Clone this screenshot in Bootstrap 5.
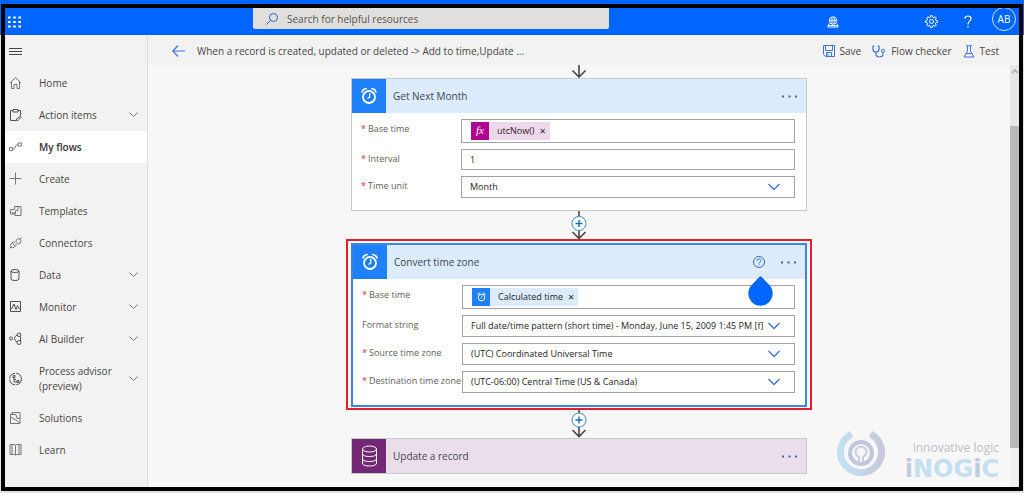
<!DOCTYPE html>
<html lang="en">
<head>
<meta charset="utf-8">
<meta name="viewport" content="width=device-width, initial-scale=1">
<title>My flows</title>
<link href="https://cdn.jsdelivr.net/npm/bootstrap@5.3.0/dist/css/bootstrap.min.css" rel="stylesheet">
<style>
:root{--brand:#0066ff;--link:#3f74d8;--ink:#484644}
body{font-family:"Open Sans","Noto Sans",sans-serif;font-size:10px;line-height:16px;color:var(--ink);background:linear-gradient(var(--brand) 35px,#e2e2e2 35px)}
svg{fill:none;stroke:currentColor;stroke-width:1;display:block;flex:none}
a{color:inherit;text-decoration:none}
.shell{padding:4px 1px 3px;min-height:100vh}
.screen{border:4px solid #000;background:#f7f7f7}
.topbar{height:27px;background:var(--brand);color:#fff}
.topbar-start{flex:0 0 248px;padding-left:3px}
.search{flex:0 1 356px;height:21px;margin-bottom:6px;background:#e1dfdd;border-radius:0 0 2px 2px;padding-left:13px;color:#315fb5;gap:9px}
.search input{background:none;border:0;outline:0;font-size:10px;line-height:16px;padding:0;color:var(--ink)}
.search input::placeholder{color:#55534f;opacity:1}
.plain{border:0;background:none;padding:0;color:inherit;font-size:inherit;line-height:inherit}
.top-tools{padding-right:3px;gap:26px}
.env-btn{margin-right:60px}
.avatar{width:24px;height:24px;border:1px solid #cfe0ff;border-radius:50%;margin-top:-6px;margin-left:-6px}
.side{flex:0 0 143px;background:#f2f2f2;border-right:1px solid #dedede}
.side .menu-btn{height:32px;padding-left:4px}
.side .nav-link{min-height:32px;padding:0 9px 0 4px;color:var(--ink);gap:16px}
.side .nav-link svg{color:#55504f}
.side .nav-link svg:last-child{color:#777}
.side .current{background:#fff;font-weight:600;color:#333}
.side .tall{min-height:47px;line-height:15px}
.cmdbar{height:30px;background:#f2f2f2;padding:2px 20px 0 24px}
.cmdbar svg{color:var(--link)}
.actions{gap:11px}
.actions button{gap:5px}
.scroller{width:9px;background:#e6e6e6;color:#aaa}
.scroller i{display:block;background:#b9b9b9;flex:0 1 322px}
.scroller b{flex:0 1 39px;background:#f0f0f0}
.step{width:100%;max-width:456px;background:#fff;border:1px solid #c9c9c9}
.step-head{background:#dcebfe;height:34px;padding-right:9px;color:#404850}
.step-head.plum{background:#ebdeeb}
.tile{width:34px;height:34px;background:#1f80fb;color:#fff;margin-right:7px}
.plum .tile{background:#742774}
.dots{color:#356cb8}
.step-body{padding:6px 11px 12px 9px}
.selected .step-body{padding-right:10px}
.selected{border:2px solid #3c88de}
.marked{width:100%;max-width:466px;border:2px solid #e2202c;padding:2px 3px 1px;background:#f3f6fa}
.fields{display:grid;grid-template-columns:100px minmax(0,1fr);row-gap:6px;font-size:9px;line-height:12px;color:#605e5c}
.fields label{padding-top:4px}
.fields .req::before{content:"*";color:#d13438;margin-right:2px}
.box,.box.form-select,.box.form-control{min-height:22px;height:22px;border:1px solid #a3a3a3;border-radius:0;background-color:#fff;font-size:9px;line-height:12px;padding:0 8px;color:#252423;box-shadow:none}
.box.form-control{height:21px;min-height:21px}
.box.form-select{background-image:url("data:image/svg+xml,%3Csvg xmlns='http://www.w3.org/2000/svg' viewBox='0 0 12 8'%3E%3Cpath d='M.5 1 6 6.5 11.5 1' fill='none' stroke='%233f74d8' stroke-width='1.3'/%3E%3C/svg%3E");background-size:12px 8px;background-position:right 14px center;padding-right:30px}
.box.tokens{height:24px;padding:0 9px}
.box.tokens input{border:0;outline:0;min-width:0;flex:1;background:none;font-size:9px;padding:0}
.token{background:#dcebfe;height:18px;padding-right:4px;margin-bottom:1px;color:#252423}
.token span{width:18px;height:18px;background:#1f80fb;color:#fff;margin-right:8px}
.token.fx{background:#efd7ec}
.token.fx span{background:#b0068f;font:italic 11px/16px "Liberation Serif",serif}
.token button{margin-left:5px;font-size:11px;line-height:12px}
.link-arrow{color:#444}
.drop{position:absolute;right:32px;top:31px;color:var(--brand)}
.watermark{position:absolute;right:20px;bottom:4px;gap:20px}
.watermark svg{margin-bottom:6px}
.wm-top{font-size:12px;line-height:14px;color:#bfc0c6}
.wm-name{font-family:"DejaVu Sans",sans-serif;font-weight:700;font-size:24px;line-height:28px;color:#c3dff1}
.wm-name em{font-style:normal;color:#bfcbdf}
</style>
</head>
<body>
<svg width="0" height="0" class="position-absolute" aria-hidden="true"><defs>
<symbol id="clock" viewBox="0 0 16 18"><circle cx="8" cy="10" r="6" stroke-width="1.8"/><path stroke-width="1.3" d="M8.700 6v4L6.500 11.500"/><path stroke-width="1.700" d="M1 5.500Q1.500 1.800 5.800 1.500M15 5.500Q14.500 1.800 10.200 1.500"/></symbol>
<symbol id="chev" viewBox="0 0 9 6"><path d="M.5.5l4 4 4-4"/></symbol>
<symbol id="more" viewBox="0 0 15 3"><path stroke-width="2" d="M0 1.500h2M6.500 1.500h2M13 1.500h2"/></symbol>
</defs></svg>
<div class="shell d-flex flex-column">
<div class="screen d-flex flex-column flex-grow-1">

<header class="topbar d-flex align-items-center overflow-hidden">
  <div class="topbar-start"><button class="plain d-block" aria-label="App launcher"><svg width="13" height="12" viewBox="0 0 13 12"><path stroke-width="2.200" stroke-dasharray="2.600 2.600" d="M0 1.500h13M0 6h13M0 10.500h13"/></svg></button></div>
  <div class="search d-flex align-items-center">
    <svg width="12" height="12" viewBox="0 0 12 12"><circle cx="7.500" cy="4.500" r="4"/><path d="M4.700 7.300.5 11.500"/></svg>
    <input class="flex-grow-1" type="search" placeholder="Search for helpful resources" aria-label="Search for helpful resources">
  </div>
  <div class="top-tools d-flex align-items-center ms-auto">
    <button class="plain env-btn" aria-label="Environment"><svg width="12" height="12" viewBox="0 0 12 12"><g stroke-width=".8"><circle cx="6" cy="4.500" r="3.800"/><path d="M2.300 4.500h7.400M6 1v7.500M4.500 1.500Q3.500 4.700 4.500 8M7.500 1.500q1 3.200 0 6.500"/></g><path d="M2 7.500.8 11h10.400L10 7.500M2 9.500h8"/></svg></button>
    <button class="plain" aria-label="Settings"><svg width="13" height="13" viewBox="0 0 13 13"><circle cx="6.500" cy="6.500" r="2"/><path d="m5.600.7-.3 1.500-1.100.5-1.300-.9-1.200 1.200.9 1.300-.5 1.100-1.500.3v1.700l1.500.3.5 1.100-.9 1.300 1.200 1.200 1.300-.9 1.100.5.3 1.500h1.800l.3-1.500 1.100-.5 1.300.9 1.200-1.200-.9-1.300.5-1.100 1.500-.3V5.700l-1.500-.3-.5-1.100.9-1.300-1.200-1.200-1.300.9-1.100-.5L7.400.7z"/></svg></button>
    <button class="plain" aria-label="Help"><svg width="8" height="13" viewBox="0 0 8 13"><path stroke-width="1.200" d="M1 3.800Q1 1 4 1t3 2.800C7 6 4 6 4 9.500M4 11v1.500"/></svg></button>
    <button class="plain avatar" aria-label="Account">AB</button>
  </div>
</header>

<div class="d-flex flex-grow-1">
  <nav class="side" aria-label="Main">
    <button class="plain menu-btn d-flex align-items-center" aria-label="Menu"><svg width="13" height="9" viewBox="0 0 13 9"><path d="M0 1.500h13M0 4.500h13M0 7.500h13"/></svg></button>
    <div class="nav flex-column">
      <a href="#" class="nav-link d-flex align-items-center"><svg width="14" height="14" viewBox="0 0 14 14"><path d="M1 7 6.500 1.500 12 7M2.500 6v6.500h2.500V8.500h3v4h2.500V6"/></svg>Home</a>
      <a href="#" class="nav-link d-flex align-items-center"><svg width="14" height="14" viewBox="0 0 14 14"><path d="M4 2.500H1.500v10h5.500M9 2.500h2.500v6M4 1.500h5v2.500H4zM7.500 12.500v-1.500l3.500-2.500 1 1-3 3z"/></svg>Action items<svg class="ms-auto" width="9" height="6"><use href="#chev"/></svg></a>
      <a href="#" class="nav-link current d-flex align-items-center" aria-current="page"><svg width="14" height="14" viewBox="0 0 14 14"><path d="M.5 7.500h3v3h-3zM9 3h3.500v3H9zM3.500 9.500c3.500 0 2-5 5.500-5"/></svg>My flows</a>
      <a href="#" class="nav-link d-flex align-items-center"><svg width="14" height="14" viewBox="0 0 14 14"><path d="M6.500.5v12M.5 6.500h12"/></svg>Create</a>
      <a href="#" class="nav-link d-flex align-items-center"><svg width="14" height="14" viewBox="0 0 14 14"><path d="M5.500 5.500v-3h6.500v9H6v-3M5.500 5.500h-4v4.500H6M9 2.500v4H6.500v2.500H3.500V8"/></svg>Templates</a>
      <a href="#" class="nav-link d-flex align-items-center"><svg width="14" height="14" viewBox="0 0 14 14"><path d="M7 4.500q2-3 4-1.500t0 4.500L9.500 8 6.500 5zM6 6.500l-2-.5-2 2q-1 1.500 0 3t3.500 0l1.500-1.500v-2M11.200 2.800l1.300-1.300M2 11 .5 12.500M3.500 7.500 6 10"/></svg>Connectors</a>
      <a href="#" class="nav-link d-flex align-items-center"><svg width="14" height="14" viewBox="0 0 14 14"><ellipse cx="6" cy="3" rx="4" ry="1.500"/><path d="M2 3v8q0 1.500 4 1.500t4-1.500V3"/></svg>Data<svg class="ms-auto" width="9" height="6"><use href="#chev"/></svg></a>
      <a href="#" class="nav-link d-flex align-items-center"><svg width="14" height="14" viewBox="0 0 14 14"><path d="M1.500 1.500h10v10h-10zM1.500 8.500h1.500l2-4.500 2 5.500 1.500-4 1.500 3h1.500"/></svg>Monitor<svg class="ms-auto" width="9" height="6"><use href="#chev"/></svg></a>
      <a href="#" class="nav-link d-flex align-items-center"><svg width="14" height="14" viewBox="0 0 14 14"><circle cx="2" cy="6.500" r="1.500"/><circle cx="10" cy="2.800" r="1.800"/><circle cx="10" cy="10.500" r="2"/><path d="M8.300 3Q5.500 4 5.500 6.500T8 10M11.500 4.500v4.500"/></svg>AI Builder<svg class="ms-auto" width="9" height="6"><use href="#chev"/></svg></a>
      <a href="#" class="nav-link tall d-flex align-items-center"><svg width="14" height="14" viewBox="0 0 14 14"><circle cx="6.500" cy="7" r="5.800" stroke-dasharray="8 1.100"/><path d="M4 3.500h2v2H4zM5 5.500V10h3M5 7.500h2M8 8.500h2v2H8z"/></svg><span>Process advisor<br>(preview)</span><svg class="ms-auto" width="9" height="6"><use href="#chev"/></svg></a>
      <a href="#" class="nav-link d-flex align-items-center"><svg width="14" height="14" viewBox="0 0 14 14"><path d="M3.500 3.500v-2h7.500v11H1.500v-9h5.500l1 4h3M1.500 6l5.500 3 4 3.500M3.500 1.500l-2 2"/></svg>Solutions</a>
      <a href="#" class="nav-link d-flex align-items-center"><svg width="14" height="14" viewBox="0 0 14 14"><path d="M1 1.500h4.500l1 .5 1-.5H12v10H7.500l-1 .5-1-.5H1zM6.500 2v10M3 1.500v10M10 1.500v10"/></svg>Learn</a>
    </div>
  </nav>

  <main class="d-flex flex-column flex-grow-1">
    <div class="cmdbar d-flex align-items-center">
      <button class="plain me-2" aria-label="Back"><svg width="13" height="12" viewBox="0 0 13 12"><path stroke-width="1.200" d="M6 .5.800 6 6 11.500M.800 6H13"/></svg></button>
      <span class="ms-1">When a record is created, updated or deleted -&gt; Add to time,Update ...</span>
      <div class="actions d-flex align-items-center ms-auto">
        <button class="plain d-flex align-items-center"><svg width="12" height="12" viewBox="0 0 12 12"><path d="M.5.5h11v11h-9l-2-2zM2.500.5v5h7v-5M3.500 11.500v-4h5v4M5 8.500v3"/></svg>Save</button>
        <button class="plain d-flex align-items-center"><svg width="14" height="13" viewBox="0 0 14 13"><path stroke-width="1.200" d="M2.500 1H1v3q0 3 3 3t3-3V1H5.500M4 7v2q0 3 3.500 3T11 9V7.500"/><circle cx="11" cy="5.800" r="1.600"/></svg>Flow checker</button>
        <button class="plain d-flex align-items-center"><svg width="12" height="13" viewBox="0 0 12 13"><path d="M3 .8h6M4.500 1v5L1 12h10L7.500 6V1M3 8.500h6"/></svg>Test</button>
      </div>
    </div>

    <div class="d-flex flex-grow-1 position-relative">
      <div class="flex-grow-1 d-flex flex-column align-items-center">
        <svg class="link-arrow" width="16" height="13" viewBox="0 0 16 13"><path stroke-width="1.600" d="M8 0v12M1.500 5.500 8 12l6.500-6.500"/></svg>

        <section class="step">
          <div class="step-head d-flex align-items-center">
            <div class="tile d-flex align-items-center justify-content-center"><svg width="16" height="18"><use href="#clock"/></svg></div>
            <span>Get Next Month</span>
            <button class="plain dots ms-auto" aria-label="Step menu"><svg width="15" height="3"><use href="#more"/></svg></button>
          </div>
          <form class="step-body fields">
            <label class="req" for="base1">Base time</label>
            <div class="box tokens d-flex align-items-center"><div class="token fx d-flex align-items-center"><span class="text-center">fx</span>utcNow()<button type="button" class="plain" aria-label="Remove utcNow()">×</button></div><input id="base1"></div>
            <label class="req" for="interval">Interval</label>
            <input id="interval" class="box form-control" value="1">
            <label class="req" for="unit">Time unit</label>
            <select id="unit" class="box form-select"><option>Month</option></select>
          </form>
        </section>

        <svg class="link-arrow" width="16" height="28" viewBox="0 0 16 28"><path stroke-width="1.600" d="M8 0v5M8 20v8M1.500 21 8 27.500 14.500 21"/><circle cx="8" cy="12.500" r="7" fill="#fff" stroke="#3c86b8"/><path stroke="#1470b0" stroke-width="1.400" d="M8 9v7M4.500 12.500h7"/></svg>

        <div class="marked">
          <section class="step selected position-relative">
            <div class="step-head d-flex align-items-center">
              <div class="tile d-flex align-items-center justify-content-center"><svg width="16" height="18"><use href="#clock"/></svg></div>
              <span>Convert time zone</span>
              <button class="plain dots ms-auto me-3" aria-label="Step help"><svg width="12" height="12" viewBox="0 0 12 12"><circle cx="6" cy="6" r="5.500"/><path d="M4 4.800Q4 3 6 3t2 1.700C8 6 6 6 6 7.500M6 8.500v1"/></svg></button>
              <button class="plain dots" aria-label="Step menu"><svg width="15" height="3"><use href="#more"/></svg></button>
            </div>
            <form class="step-body fields">
              <label class="req" for="base2">Base time</label>
              <div class="box tokens d-flex align-items-center"><div class="token d-flex align-items-center"><span class="d-flex align-items-center justify-content-center"><svg width="9" height="10"><use href="#clock"/></svg></span>Calculated time<button type="button" class="plain" aria-label="Remove Calculated time">×</button></div><input id="base2"></div>
              <label for="fmt">Format string</label>
              <select id="fmt" class="box form-select"><option>Full date/time pattern (short time) - Monday, June 15, 2009 1:45 PM [f]</option></select>
              <label class="req" for="src">Source time zone</label>
              <select id="src" class="box form-select"><option>(UTC) Coordinated Universal Time</option></select>
              <label class="req" for="dst">Destination time zone</label>
              <select id="dst" class="box form-select"><option>(UTC-06:00) Central Time (US &amp; Canada)</option></select>
            </form>
            <svg class="drop" width="25" height="30" viewBox="0 0 25 30"><path fill="currentColor" stroke="none" d="M11.500.8q1-1.300 2 0L21.300 9a12.200 12.200 0 1 1-17.600 0z"/></svg>
          </section>
        </div>

        <svg class="link-arrow" width="16" height="28" viewBox="0 0 16 28"><path stroke-width="1.600" d="M8 0v4M8 17v10M1.500 20 8 26.500 14.500 20"/><circle cx="8" cy="10" r="7" fill="#fff" stroke="#3c86b8"/><path stroke="#1470b0" stroke-width="1.400" d="M8 6.500v7M4.500 10h7"/></svg>

        <section class="step">
          <div class="step-head plum d-flex align-items-center">
            <div class="tile d-flex align-items-center justify-content-center"><svg width="17" height="22" viewBox="0 0 17 22"><ellipse cx="8.500" cy="4" rx="7" ry="3"/><path d="M1.500 4v14q0 3 7 3t7-3V4M1.500 8.500q0 3 7 3t7-3M1.500 13.500q0 3 7 3t7-3"/></svg></div>
            <span>Update a record</span>
            <button class="plain dots ms-auto" aria-label="Step menu"><svg width="15" height="3"><use href="#more"/></svg></button>
          </div>
        </section>
      </div>

      <div class="watermark d-flex align-items-end">
        <svg width="48" height="48" viewBox="0 0 48 48"><defs><linearGradient id="ring"><stop offset="0" stop-color="#c3e2f1"/><stop offset="1" stop-color="#c6c9dc"/></linearGradient></defs><path stroke="url(#ring)" stroke-width="7" d="M14.500 5A20.500 20.500 0 1 0 33.500 5"/><circle cx="24" cy="24" r="11" stroke="#c2c6dc" stroke-width="4"/><path stroke="#c9cede" stroke-width="2" d="M22 34v-6a5.500 5.500 0 1 1 4 0v6"/></svg>
        <div>
          <div class="wm-top text-end">innovative logic</div>
          <div class="wm-name"><em>i</em>NOG<em>i</em>C</div>
        </div>
      </div>

      <div class="scroller d-flex flex-column" aria-hidden="true">
        <svg width="9" height="61" viewBox="0 0 9 61"><path stroke-width="1.500" d="M2 8l3-3 3 3"/></svg>
        <i></i><b></b>
      </div>
    </div>
  </main>
</div>
</div>
</div>
<script src="https://cdn.jsdelivr.net/npm/bootstrap@5.3.0/dist/js/bootstrap.bundle.min.js"></script>
</body>
</html>
